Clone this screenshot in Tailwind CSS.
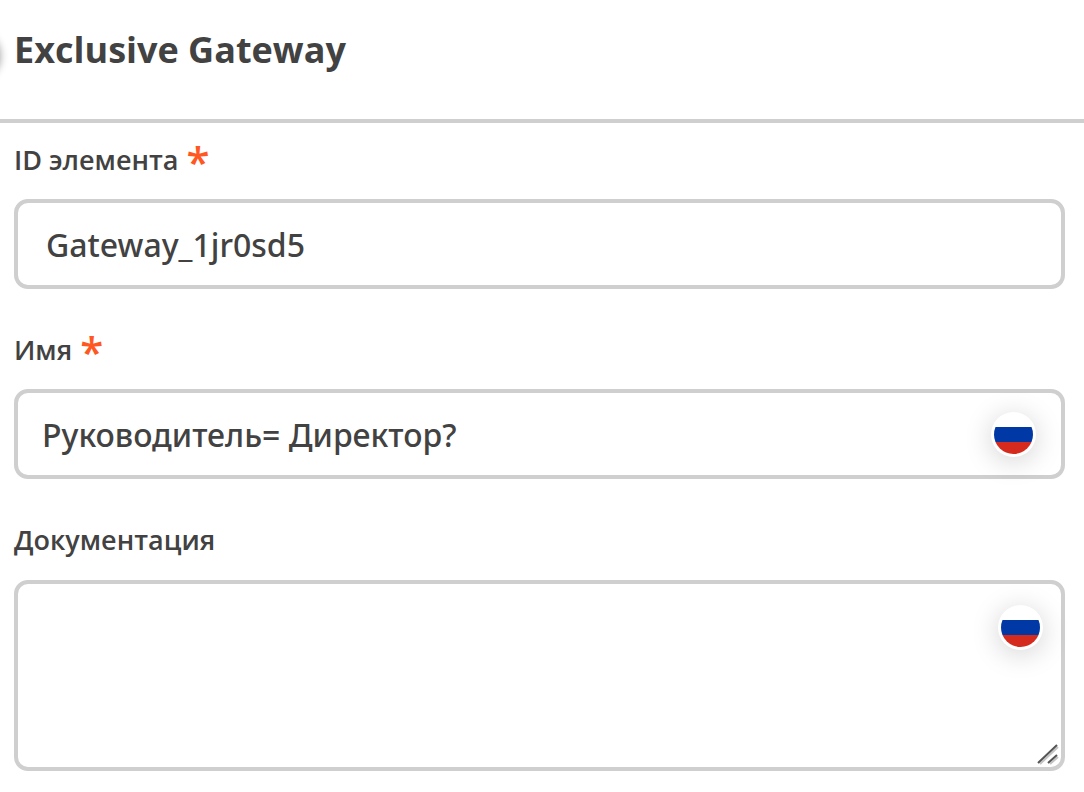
<!DOCTYPE html>
<html lang="ru">
<head>
<meta charset="utf-8">
<title>Exclusive Gateway</title>
<script src="https://cdn.jsdelivr.net/npm/@tailwindcss/browser@4"></script>
</head>
<body class="min-h-screen overflow-x-hidden bg-white font-['Open_Sans',sans-serif] text-[#424242]">
<header class="relative border-b-4 border-[#cfcfcf] px-3.5 pt-6 pb-[43px]">
  <span class="absolute top-8 -left-12 size-12 rounded-full bg-white shadow-[0_0_8px_rgba(0,0,0,0.4)]"></span>
  <h1 class="text-4xl leading-[52px] font-bold">Exclusive Gateway</h1>
</header>
<form class="flex flex-col gap-10 pt-4 pr-[19px] pb-5 pl-3.5">
  <div>
    <label for="element-id" class="flex h-[60px] items-start gap-2 text-[27px] leading-[42px] font-semibold">ID элемента <span class="text-[42px] leading-[44px] text-[#ff5722]">*</span></label>
    <input id="element-id" value="Gateway_1jr0sd5" class="block h-[90px] w-full rounded-[14px] border-4 border-[#cfcfcf] px-7 font-['Noto_Sans',sans-serif] text-[32px] font-medium outline-none">
  </div>
  <div>
    <label for="element-name" class="flex h-[60px] items-start gap-2 text-[27px] leading-[42px] font-semibold">Имя <span class="text-[42px] leading-[44px] text-[#ff5722]">*</span></label>
    <div class="relative">
      <input id="element-name" value="Руководитель= Директор?" class="block h-[90px] w-full rounded-[14px] border-4 border-[#cfcfcf] pr-24 pl-6 font-['Noto_Sans',sans-serif] text-[32px] font-medium outline-none">
      <button type="button" aria-label="Русский" class="absolute top-[23px] right-[29px] size-[45px] rounded-full bg-white p-[3px] shadow-[0_4px_28px_rgba(0,0,0,0.18)]">
        <svg viewBox="0 0 39 39" class="size-full overflow-hidden rounded-full"><path fill="#fff" d="M0 0h39v12H0z"/><path fill="#0039a6" d="M0 12h39v15H0z"/><path fill="#d52b1e" d="M0 27h39v12H0z"/></svg>
      </button>
    </div>
  </div>
  <div>
    <label for="documentation" class="flex h-[61px] items-start text-[27px] leading-[42px] font-semibold">Документация</label>
    <div class="relative">
      <textarea id="documentation" class="block h-[191px] w-full resize-none rounded-[14px] border-4 border-[#cfcfcf] px-6 py-4 font-['Noto_Sans',sans-serif] text-[32px] font-medium outline-none"></textarea>
      <button type="button" aria-label="Русский" class="absolute top-[25px] right-[22px] size-[45px] rounded-full bg-white p-[3px] shadow-[0_4px_28px_rgba(0,0,0,0.18)]">
        <svg viewBox="0 0 39 39" class="size-full overflow-hidden rounded-full"><path fill="#fff" d="M0 0h39v12H0z"/><path fill="#0039a6" d="M0 12h39v15H0z"/><path fill="#d52b1e" d="M0 27h39v12H0z"/></svg>
      </button>
      <svg viewBox="0 0 22 22" class="pointer-events-none absolute right-1.5 bottom-1.5 size-[22px]" fill="none" stroke-width="2"><path stroke="#c4c4c4" d="M3 21 21 4M13 21l8-7"/><path stroke="#555" d="M1 20 20 2M11 20l9-8"/></svg>
    </div>
  </div>
</form>
</body>
</html>
